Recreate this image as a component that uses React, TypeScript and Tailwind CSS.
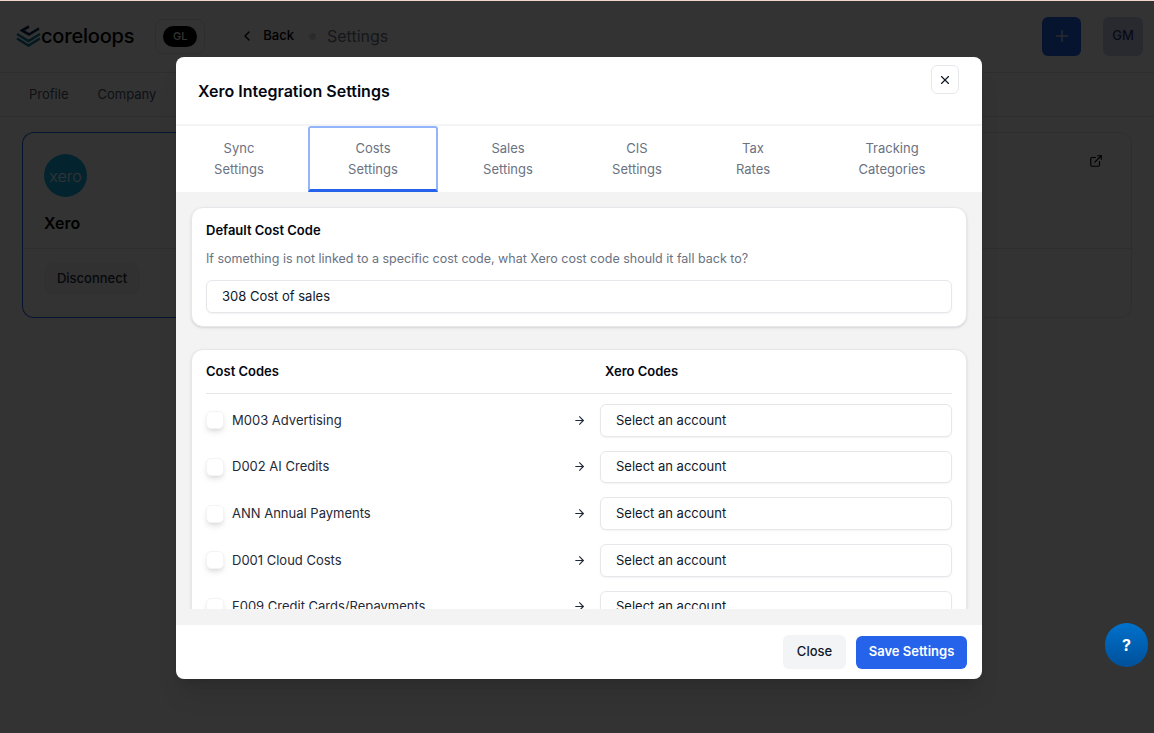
import { ArrowRight, ChevronLeft, ExternalLink, Plus, X } from "lucide-react";

const tabs = [
  { top: "Sync", bottom: "Settings", width: "w-[126px] mr-[6px]" },
  { top: "Costs", bottom: "Settings", width: "w-[130px]", active: true },
  { top: "Sales", bottom: "Settings", width: "w-[140px]" },
  { top: "CIS", bottom: "Settings", width: "w-[118px]" },
  { top: "Tax", bottom: "Rates", width: "w-[114px]" },
  { top: "Tracking", bottom: "Categories", width: "w-[164px]" },
];

const costCodes = [
  "M003 Advertising",
  "D002 AI Credits",
  "ANN Annual Payments",
  "D001 Cloud Costs",
  "F009 Credit Cards/Repayments",
  "D003 Software",
];

function Logo() {
  return (
    <svg width="27" height="22" viewBox="0 0 27 22" fill="none" strokeWidth="2.6" strokeLinejoin="miter">
      <path d="M24 3.5 L14 9.5 L7 5.5 L14 1.5" stroke="#0f2c4f" />
      <path d="M2 9 L13.5 16 L25 9" stroke="#0e7c9c" />
      <path d="M2 13.5 L13.5 20.5 L25 13.5" stroke="#0e7c9c" />
    </svg>
  );
}

function Background() {
  return (
    <div className="flex flex-col h-full bg-white">
      <header className="flex items-center h-[73px] border-b border-gray-200 pl-[15px] pr-[11px]">
        <Logo />
        <span className="ml-[-1px] text-[20px] font-medium tracking-[-0.2px] text-black">coreloops</span>
        <div className="ml-[21px] flex items-center justify-center w-[50px] h-[35px] rounded-lg border border-gray-200">
          <span className="flex items-center justify-center w-[34px] h-[21px] rounded-full bg-black text-white text-[11px] font-medium">
            GL
          </span>
        </div>
        <ChevronLeft className="ml-[34px] text-black" size={16} strokeWidth={2} />
        <span className="ml-[8px] text-[13px] font-medium text-black">Back</span>
        <span className="ml-[15px] w-[7px] h-[7px] rounded-full bg-gray-300" />
        <span className="ml-[11px] text-[16px] text-gray-500">Settings</span>
        <div className="ml-auto flex items-center gap-[22px]">
          <div className="flex items-center justify-center w-[39px] h-[39px] rounded-md bg-[#2563eb]">
            <Plus className="text-gray-300" size={18} />
          </div>
          <div className="flex items-center justify-center w-[40px] h-[39px] rounded-md bg-[#c7d2e8] text-[#2e3a80] text-[13px] font-medium">
            GM
          </div>
        </div>
      </header>
      <nav className="flex items-center gap-[29px] h-[44px] pl-[29px] border-b border-gray-200 text-[13px] text-gray-600">
        <span>Profile</span>
        <span>Company</span>
      </nav>
      <div className="flex mt-[15px] mx-[22px] h-[186px]">
        <div className="flex-1 flex flex-col border border-r-0 border-[#2563eb] rounded-l-xl">
          <div className="h-[115px] pl-[21px] pt-[21px]">
            <div className="flex items-center justify-center w-[43px] h-[43px] rounded-full bg-[#13b5ea] text-white text-[16px] font-light">
              xero
            </div>
            <div className="mt-[14px] text-[16px] font-semibold text-black">Xero</div>
          </div>
          <div className="border-t border-gray-200 pl-[21px] pt-[14px]">
            <div className="flex items-center justify-center w-[96px] h-[32px] rounded-lg bg-gray-100 text-[13px] font-medium text-gray-800">
              Disconnect
            </div>
          </div>
        </div>
        <div className="flex-1 flex flex-col border border-l-0 border-gray-200 rounded-r-xl">
          <div className="flex justify-end h-[115px] pr-[28px] pt-[21px]">
            <ExternalLink className="text-black" size={14} />
          </div>
          <div className="border-t border-gray-200" />
        </div>
      </div>
    </div>
  );
}

function Field({ label }: { label: string }) {
  return (
    <div className="flex items-center h-[32.67px] pl-[15px] bg-white border border-gray-200 rounded-md text-[13px] text-gray-900 shadow-xs">
      {label}
    </div>
  );
}

function CostRow({ label }: { label: string }) {
  return (
    <div className="flex items-center">
      <div className="flex items-center flex-1 min-w-0">
        <span className="w-[18px] h-[18px] rounded-[5px] border border-gray-100 bg-white shadow-md" />
        <span className="ml-[8px] text-[13px] text-gray-800">{label}</span>
      </div>
      <ArrowRight className="text-gray-800 mr-[14px]" size={13} />
      <div className="w-[352px]">
        <Field label="Select an account" />
      </div>
    </div>
  );
}

function Modal() {
  return (
    <div className="flex flex-col w-[806px] h-[622px] ml-[176px] mt-[57px] bg-white rounded-lg shadow-xl overflow-hidden">
      <div className="flex items-center justify-between h-[69px] pl-[22px] pr-[23px] border-b-2 border-gray-100">
        <h2 className="text-[16px] font-semibold text-gray-950">Xero Integration Settings</h2>
        <button className="flex items-center justify-center w-[28px] h-[29px] rounded-md border border-gray-200 mb-[11px] mt-[-11px]">
          <X className="text-gray-900" size={14} />
        </button>
      </div>
      <div className="flex h-[66px] bg-white">
        {tabs.map((tab) => (
          <div
            key={tab.top}
            className={`flex flex-col items-center justify-center text-[13px] leading-[21px] text-gray-500 ${tab.width} ${
              tab.active ? "rounded-t-[3px] border-2 border-[#93b4fb] border-b-[3px] border-b-[#2563eb]" : ""
            }`}
          >
            <span>{tab.top}</span>
            <span>{tab.bottom}</span>
          </div>
        ))}
      </div>
      <div className="flex-1 min-h-0 bg-[#f3f3f3] pb-[16px]">
        <div className="h-full overflow-hidden pt-[15px] px-[15px]">
          <section className="h-[120px] bg-white rounded-xl border border-gray-200 shadow-sm px-[14px] pt-[13px]">
            <h3 className="text-[13px] font-semibold leading-[18px] text-gray-950">Default Cost Code</h3>
            <p className="mt-[11px] text-[12.5px] leading-[18px] text-gray-500">
              If something is not linked to a specific cost code, what Xero cost code should it fall back to?
            </p>
            <div className="mt-[12px]">
              <Field label="308 Cost of sales" />
            </div>
          </section>
          <section className="mt-[22px] bg-white rounded-xl border border-gray-200 shadow-sm px-[14px] pb-[14px]">
            <div className="flex items-center h-[44px] border-b border-gray-200 text-[13px] font-semibold text-gray-950">
              <span className="flex-1">Cost Codes</span>
              <span className="w-[347px]">Xero Codes</span>
            </div>
            <div className="flex flex-col gap-[14px] pt-[10px]">
              {costCodes.map((code) => (
                <CostRow key={code} label={code} />
              ))}
            </div>
          </section>
        </div>
      </div>
      <div className="flex items-center justify-end gap-[10px] h-[54px] pr-[15px]">
        <button className="w-[63px] h-[34px] rounded-md bg-gray-100 text-[13px] font-medium text-gray-900">Close</button>
        <button className="w-[111px] h-[33px] rounded-md bg-[#2563eb] text-[13px] font-semibold text-white">
          Save Settings
        </button>
      </div>
    </div>
  );
}

export default function App() {
  return (
    <div
      className="relative h-[733px] overflow-hidden"
      style={{ fontFamily: "Inter, 'Liberation Sans', sans-serif" }}
    >
      <Background />
      <div className="absolute inset-0 bg-black/80">
        <div className="h-px bg-[#f3d8c9]" />
        <div className="-mt-px">
          <Modal />
        </div>
      </div>
      <button className="absolute left-[1105px] top-[623px] w-[43px] h-[44px] rounded-full bg-gradient-to-b from-[#0072cc] to-[#00509a] text-white text-[16px] font-bold">
        ?
      </button>
    </div>
  );
}
